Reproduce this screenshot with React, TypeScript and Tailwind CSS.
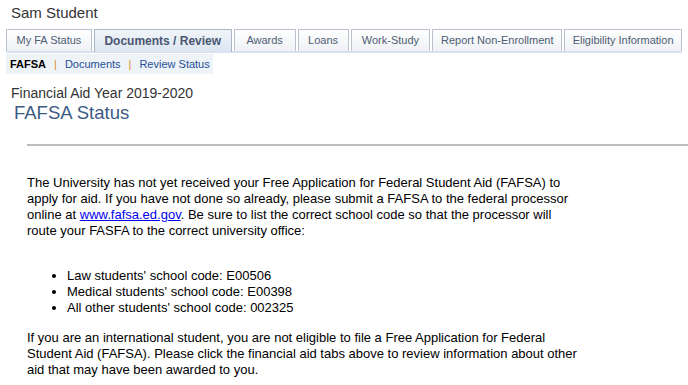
import React from 'react'

const tabs = [
    { label: 'My FA Status', w: 'w-[86px]' },
    { label: 'Documents / Review', w: 'w-[138px]', active: true },
    { label: 'Awards', w: 'w-[62px]' },
    { label: 'Loans', w: 'w-[51px]' },
    { label: 'Work-Study', w: 'w-[80px]' },
    { label: 'Report Non-Enrollment', w: 'w-[130px]' },
    { label: 'Eligibility Information', w: 'w-[118px]' },
]

const codes = [
    "Law students' school code: E00506",
    "Medical students' school code: E00398",
    "All other students' school code: 002325",
]

export default function App() {
    return (
        <div className="w-[688px] h-[385px] bg-white overflow-hidden font-['Liberation_Sans',Arial,sans-serif]">
            <div className="pl-[11px] pt-[3px] h-[29px] text-[15px] leading-[20px] text-[#333]">Sam Student</div>

            {/* tab strip */}
            <div className="ml-[6px] w-[676px]">
                <div className="flex gap-[2px] items-end h-[22px] whitespace-nowrap">
                    {tabs.map((t) =>
                        t.active ? (
                            <div key={t.label}
                                className={`${t.w} h-[23px] -mb-[1px] flex items-center justify-center border border-b-0 border-[#a9b6c6] bg-gradient-to-b from-[#f1f5f9] to-[#dbe5f0] text-[12px] font-bold text-[#4a5670]`}>
                                {t.label}
                            </div>
                        ) : (
                            <div key={t.label}
                                className={`${t.w} h-[22px] flex items-center justify-center border border-b-0 border-[#b9c1cc] bg-gradient-to-b from-white to-[#eef1f5] text-[11px] text-[#4e5d73]`}>
                                {t.label}
                            </div>
                        )
                    )}
                </div>
                <div className="h-[2px] bg-[#d7e1ee]" />
            </div>

            {/* sub nav */}
            <div className="ml-[6px] mt-[1px] w-[207px] h-[20px] bg-[#eef3f8] flex items-center pl-[4px] text-[11px] whitespace-nowrap">
                <span className="font-bold text-black">FAFSA</span>
                <span className="mx-[8px] text-[#e08a2a]">|</span>
                <span className="text-[#1f4f9a]">Documents</span>
                <span className="mx-[8px] text-[#e08a2a]">|</span>
                <span className="text-[#1f4f9a]">Review Status</span>
            </div>

            <div className="pl-[11px] mt-[10px] text-[14px] leading-[18px] text-[#333]">Financial Aid Year 2019-2020</div>
            <div className="pl-[14px] text-[18.5px] leading-[22px] text-[#3c5a84]">FAFSA Status</div>

            <div className="ml-[27px] mt-[20px] h-[2px] bg-[#bdbdbd]" />

            <div className="pl-[27px] pt-[29px] text-[13px] leading-[16px] text-black">
                <p className="w-[555px]">
                    The University has not yet received your Free Application for Federal Student Aid (FAFSA) to
                    apply for aid. If you have not done so already, please submit a FAFSA to the federal processor
                    online at <a className="text-[#0000ee] underline" href="#">www.fafsa.ed.gov</a>. Be sure to list the correct school code so that the processor will
                    route your FASFA to the correct university office:
                </p>

                <ul className="mt-[29px] pl-[40px] list-disc">
                    {codes.map((c) => (
                        <li key={c}>{c}</li>
                    ))}
                </ul>

                <p className="mt-[14px] w-[555px]">
                    If you are an international student, you are not eligible to file a Free Application for Federal
                    Student Aid (FAFSA). Please click the financial aid tabs above to review information about other
                    aid that may have been awarded to you.
                </p>
            </div>
        </div>
    )
}
